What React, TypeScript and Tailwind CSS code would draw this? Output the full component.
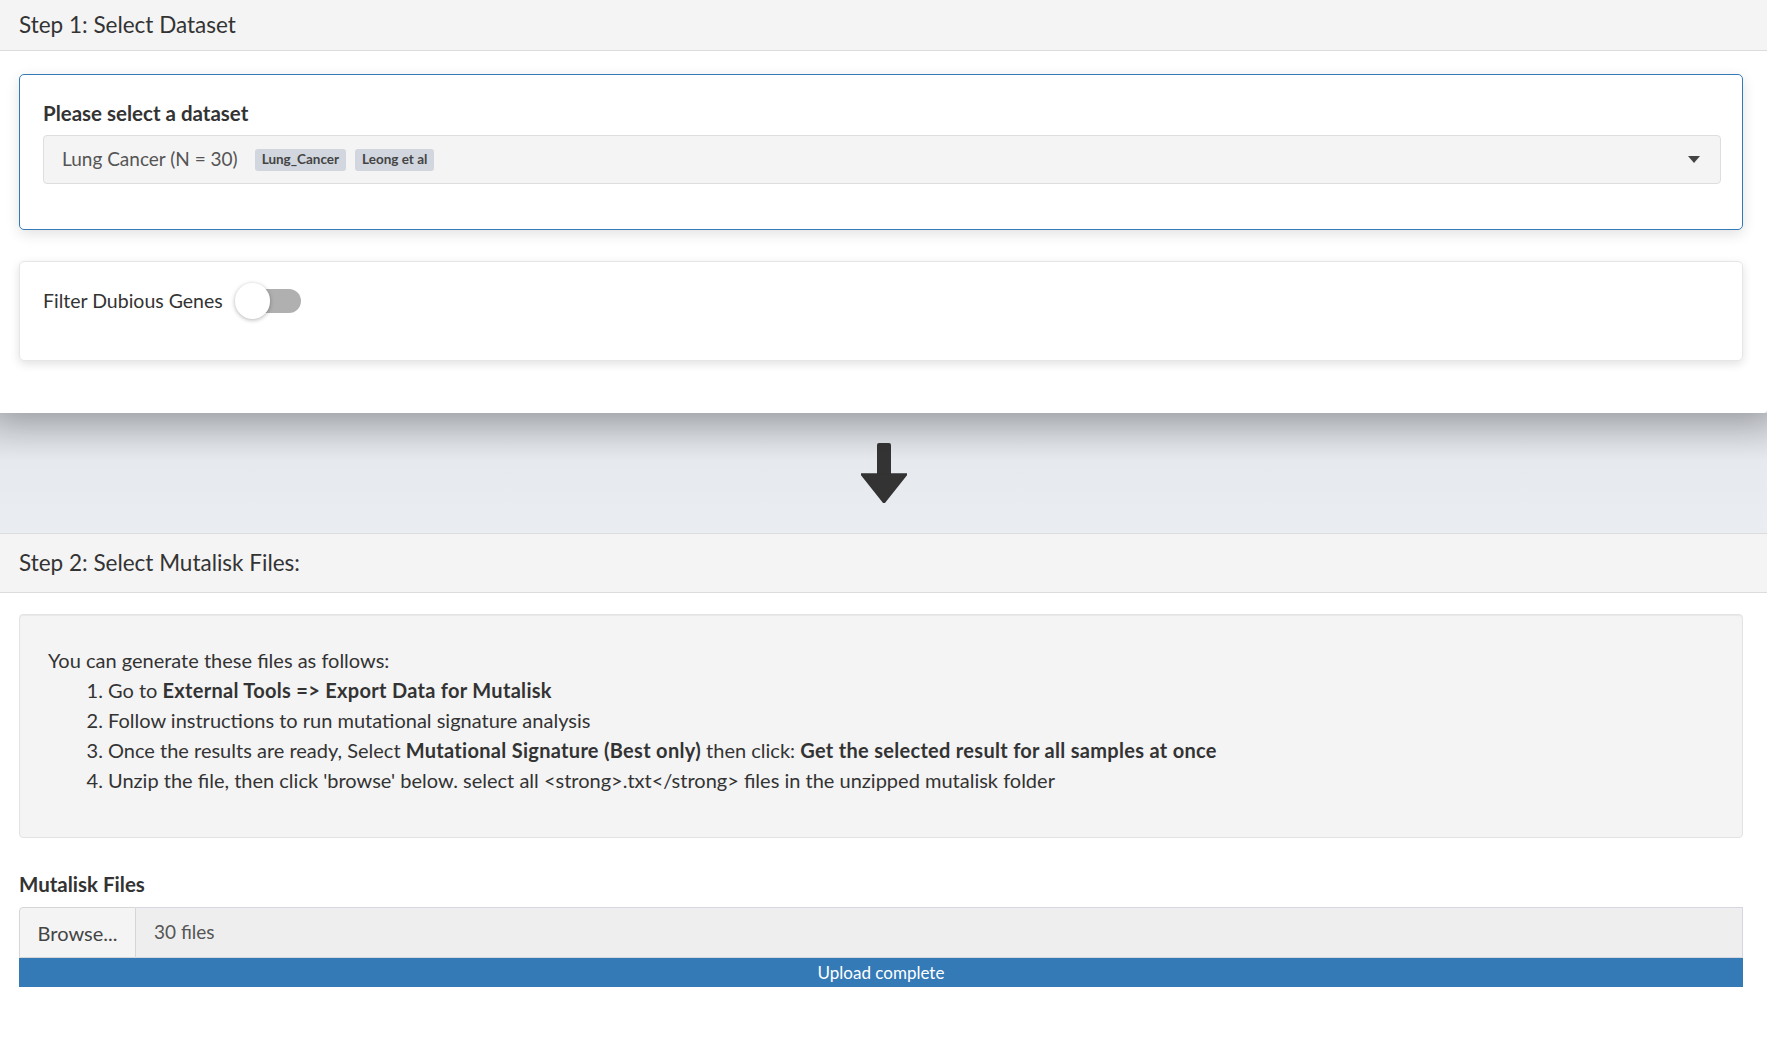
import { useState } from "react";

function DownArrow() {
  return (
    <svg width="46" height="60" viewBox="0 0 46 60" aria-hidden="true">
      <rect x="16" y="0" width="14" height="34" rx="2" fill="#333" />
      <path d="M0 31 H46 L23 60 Z" fill="#333" strokeLinejoin="round" stroke="#333" strokeWidth="1.5" />
    </svg>
  );
}

function Badge({ children }: { children: React.ReactNode }) {
  return (
    <span className="inline-flex h-[22px] items-center rounded-[3px] bg-[#d2d6de] px-[7px] text-[13.5px] font-bold text-[#444]">
      {children}
    </span>
  );
}

export default function App() {
  const [filterOn, setFilterOn] = useState(false);

  return (
    <div className="flex min-h-screen flex-col bg-[#ecf0f5] font-['Lato',sans-serif] text-[#333]">
      {/* Step 1 panel */}
      <section className="relative z-10 rounded-br-[4px] bg-white shadow-[0_10px_30px_rgba(0,0,0,0.18)]">
        <div className="flex h-[51px] items-center border-b border-[#dcdcdc] bg-[#f4f4f4] px-[19px] text-[22.5px]">
          Step 1: Select Dataset
        </div>
        <div className="pb-[52px] pl-[19px] pr-[24px] pt-[23px]">
          <div className="rounded-[5px] border border-[#337ab7] pb-[45px] pl-[23px] pr-[21px] pt-[27px] shadow-[0_4px_14px_rgba(0,0,0,0.12)]">
            <div className="mb-[11px] text-[20.5px] font-bold leading-[22px]">Please select a dataset</div>
            <div className="flex h-[49px] items-center rounded-[4px] border border-[#dedede] bg-[#f4f4f4] pl-[18px] pr-[20px]">
              <span className="text-[19px] text-[#555]">Lung Cancer (N = 30)</span>
              <div className="ml-[17px] flex gap-[9px]">
                <Badge>Lung_Cancer</Badge>
                <Badge>Leong et al</Badge>
              </div>
              <svg className="ml-auto" width="12" height="7" viewBox="0 0 12 7" aria-hidden="true">
                <path d="M0 0 H12 L6 7 Z" fill="#444" />
              </svg>
            </div>
          </div>

          <div className="mt-[31px] flex h-[100px] items-start rounded-[5px] border border-[#e6e6e6] px-[23px] pt-[24px] shadow-[0_3px_10px_rgba(0,0,0,0.12)]">
            <label className="flex items-center gap-[12px] text-[19.5px] text-[#333]">
              Filter Dubious Genes
              <button
                type="button"
                onClick={() => setFilterOn(!filterOn)}
                className="relative h-[24px] w-[66px]"
              >
                <span className={`absolute right-0 top-0 h-[24px] w-[52px] rounded-full ${filterOn ? "bg-[#337ab7]" : "bg-[#b0b0b0]"}`} />
                <span
                  className={`absolute top-[-6px] h-[36px] w-[35px] rounded-full bg-white shadow-[0_1px_4px_rgba(0,0,0,0.3)] ${filterOn ? "left-[31px]" : "left-0"}`}
                />
              </button>
            </label>
          </div>
        </div>
      </section>

      {/* arrow band */}
      <div className="flex h-[120px] items-center justify-center bg-gradient-to-b from-[#c4c7cc] via-[#e6e9ee] via-40% to-[#eaedf1]">
        <DownArrow />
      </div>

      {/* Step 2 panel */}
      <section className="flex-1 border-t border-[#dcdcdc] bg-white">
        <div className="flex h-[59px] items-center border-b border-[#dcdcdc] bg-[#f4f4f4] px-[19px] text-[22.5px]">
          Step 2: Select Mutalisk Files:
        </div>
        <div className="pb-[52px] pl-[19px] pr-[24px] pt-[21px]">
          <div className="rounded-[4px] border border-[#e3e3e3] bg-[#f4f4f4] pb-[42px] pl-[28px] pr-[28px] pt-[30px] text-[20px] leading-[30px] shadow-[inset_0_1px_1px_rgba(0,0,0,0.05)]">
            <p>You can generate these files as follows:</p>
            <ol className="list-decimal pl-[60px] [&_strong]:tracking-[0.3px]">
              <li>
                Go to <strong>External Tools =&gt; Export Data for Mutalisk</strong>
              </li>
              <li>Follow instructions to run mutational signature analysis</li>
              <li>
                Once the results are ready, Select <strong>Mutational Signature (Best only)</strong> then click:{" "}
                <strong>Get the selected result for all samples at once</strong>
              </li>
              <li>
                Unzip the file, then click 'browse' below. select all &lt;strong&gt;.txt&lt;/strong&gt; files in the unzipped mutalisk folder
              </li>
            </ol>
          </div>

          <div className="mt-[34px] text-[20.5px] font-bold leading-[24px]">Mutalisk Files</div>
          <div className="mt-[11px] flex h-[51px]">
            <div className="flex w-[117px] items-center justify-center rounded-tl-[4px] border border-[#d6d6d6] bg-[#f4f4f4] text-[20px] text-[#444]">
              Browse...
            </div>
            <div className="flex flex-1 items-center border-y border-r border-[#d6d6e0] bg-[#eeeeee] px-[18px] text-[19px] text-[#555]">
              30 files
            </div>
          </div>
          <div className="flex h-[29px] items-center justify-center bg-[#337ab7] text-[17px] text-white">
            Upload complete
          </div>
        </div>
      </section>
    </div>
  );
}
